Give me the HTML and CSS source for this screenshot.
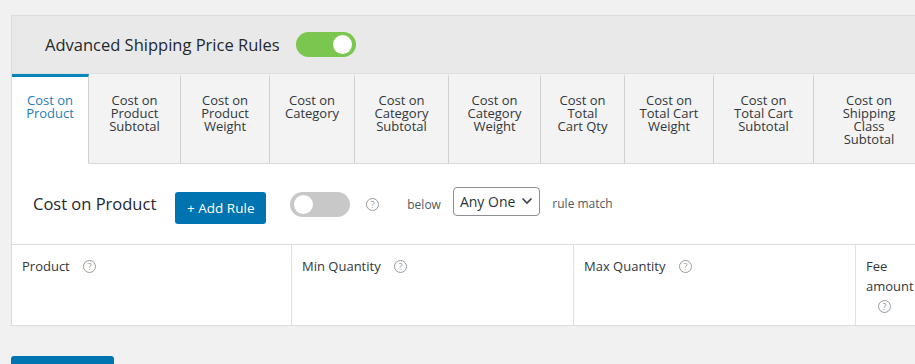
FILE: index.html
```html
<!DOCTYPE html>
<html lang="en">
<head>
    <meta charset="UTF-8">
    <title>Advanced Shipping Price Rules</title>
    <link rel="stylesheet" href="styles.css">
</head>
<body>
    <div class="panel">
        <div class="panel-head">
            <h2>Advanced Shipping Price Rules</h2>
            <span class="switch on"><span class="knob"></span></span>
        </div>
        <ul class="tabs">
            <li class="active">Cost on<br>Product</li>
            <li>Cost on<br>Product<br>Subtotal</li>
            <li>Cost on<br>Product<br>Weight</li>
            <li>Cost on<br>Category</li>
            <li>Cost on<br>Category<br>Subtotal</li>
            <li>Cost on<br>Category<br>Weight</li>
            <li>Cost on<br>Total<br>Cart Qty</li>
            <li>Cost on<br>Total Cart<br>Weight</li>
            <li>Cost on<br>Total Cart<br>Subtotal</li>
            <li>Cost on<br>Shipping<br>Class<br>Subtotal</li>
        </ul>
        <div class="rule-bar">
            <h3>Cost on Product</h3>
            <button class="btn">+ Add Rule</button>
            <span class="switch"><span class="knob"></span></span>
            <span class="help">?</span>
            <span class="label">below</span>
            <span class="select">Any One
                <svg width="12" height="8" viewBox="0 0 12 8"><path d="M1.5 1.5 6 6l4.5-4.5" fill="none" stroke="#3c434a" stroke-width="1.6"/></svg>
            </span>
            <span class="label top">rule match</span>
        </div>
        <table class="rules">
            <tr>
                <th class="c1">Product <span class="help">?</span></th>
                <th class="c2">Min Quantity <span class="help">?</span></th>
                <th class="c3">Max Quantity <span class="help">?</span></th>
                <th class="c4">Fee<br>amount<br><span class="help">?</span></th>
            </tr>
        </table>
    </div>
    <button class="btn save">Save changes</button>
</body>
</html>
```

FILE: styles.css
```css
html, body {
    margin: 0;
    overflow: hidden;
}
body {
    background: #f1f1f1;
    font-family: "Open Sans", "Noto Sans", sans-serif;
    color: #32373c;
    padding: 15px 0 0 11px;
    width: 1000px;
    height: 349px;
}
.panel {
    border: 1px solid #dcdcdc;
    border-right: none;
    background: #fff;
}
.panel-head {
    display: flex;
    align-items: center;
    height: 57px;
    padding-left: 33px;
    background: #e9e9e9;
    border-bottom: 1px solid #dedede;
}
.panel-head h2 {
    margin: 0 16px 0 0;
    font-size: 16.5px;
    font-weight: 400;
    color: #23282d;
}
/* toggle switch */
.switch {
    display: inline-block;
    position: relative;
    width: 60px;
    height: 25px;
    border-radius: 13px;
    background: #c8c8c8;
    flex: none;
}
.switch .knob {
    position: absolute;
    top: 3px;
    left: 4px;
    width: 19px;
    height: 19px;
    border-radius: 50%;
    background: #fff;
}
.switch.on {
    background: #7ac64f;
}
.switch.on .knob {
    left: auto;
    right: 4px;
}
/* tabs */
.tabs {
    display: flex;
    margin: 0;
    padding: 0;
    list-style: none;
    background: #f3f3f3;
}
.tabs li {
    flex: none;
    height: 69px;
    padding-top: 17px;
    border-top: 3px solid transparent;
    border-right: 1px solid #cfcfcf;
    border-bottom: 1px solid #d9d9d9;
    font-size: 13px;
    line-height: 13px;
    text-align: center;
    color: #32373c;
}
.tabs li.active {
    background: #fff;
    border-top-color: #0a84bd;
    border-bottom-color: #fff;
    color: #1f7db3;
}
.tabs li:nth-child(1) { width: 76px; }
.tabs li:nth-child(2) { width: 91px; }
.tabs li:nth-child(3) { width: 88px; }
.tabs li:nth-child(4) { width: 84px; }
.tabs li:nth-child(5) { width: 93px; }
.tabs li:nth-child(6) { width: 91px; }
.tabs li:nth-child(7) { width: 83px; }
.tabs li:nth-child(8) { width: 88px; }
.tabs li:nth-child(9) { width: 99px; }
.tabs li:nth-child(10) { width: 110px; }
/* rule bar */
.rule-bar {
    display: flex;
    align-items: center;
    height: 80px;
    padding-left: 21px;
    border-bottom: 1px solid #dcdcdc;
}
.rule-bar h3 {
    margin: 0 19px 2px 0;
    font-size: 16.5px;
    font-weight: 400;
    color: #23282d;
}
.btn {
    border: none;
    border-radius: 3px;
    background: #0074b0;
    color: #fff;
    font-family: inherit;
    font-size: 13.5px;
    padding: 0;
}
.rule-bar .btn {
    width: 91px;
    height: 32px;
    margin: 8px 24px 0 0;
}
.rule-bar .switch {
    margin-right: 16px;
}
.help {
    display: inline-flex;
    align-items: center;
    justify-content: center;
    width: 11px;
    height: 11px;
    border: 1px solid #9a9a9a;
    border-radius: 50%;
    color: #9a9a9a;
    font-size: 9px;
    line-height: 1;
    vertical-align: 1px;
}
.rule-bar .help {
    margin-right: 28px;
}
.label {
    font-size: 12px;
    color: #50575e;
    margin-right: 12px;
}
.label.top {
    align-self: flex-start;
    margin-top: 31px;
}
.select {
    display: inline-flex;
    align-items: center;
    gap: 6px;
    height: 27px;
    padding: 0 6px 0 6px;
    margin: 0 12px 6px 0;
    border: 1px solid #8c8f94;
    border-radius: 4px;
    font-size: 14px;
    color: #2c3338;
}
/* table */
.rules {
    border-collapse: collapse;
}
.rules th {
    height: 69px;
    padding: 11px 10px 0 10px;
    vertical-align: top;
    text-align: left;
    font-size: 13px;
    font-weight: 400;
    color: #32373c;
    line-height: 20px;
    border-left: 1px solid #e1e1e1;
}
.rules th .help {
    margin-left: 10px;
}
.rules th.c1 { width: 259px; border-left: none; }
.rules th.c2 { width: 261px; }
.rules th.c3 { width: 261px; }
.rules th.c4 { width: 60px; }
.rules th.c4 .help {
    margin-left: 12px;
}
.save {
    display: block;
    margin-top: 30px;
    width: 103px;
    height: 40px;
    padding-top: 12px;
}
```
